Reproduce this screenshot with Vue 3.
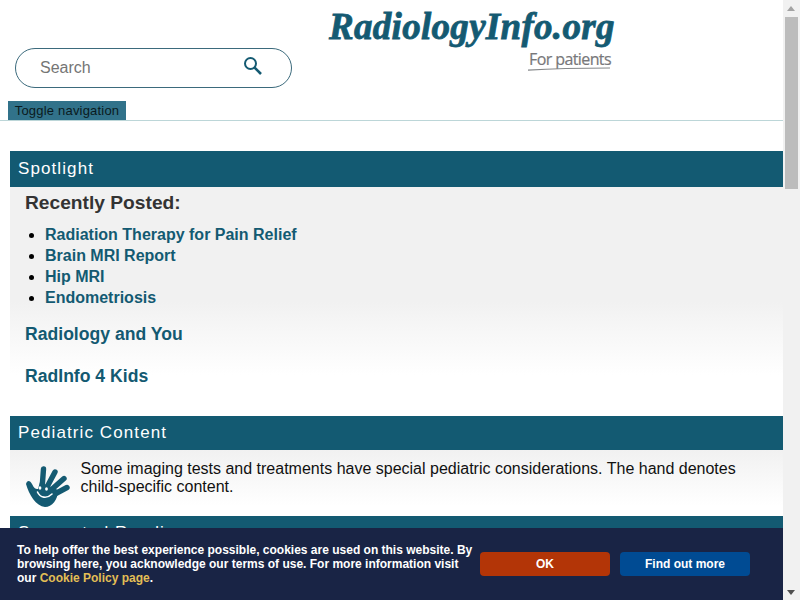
<template>
  <div class="screen">
    <div class="page">
      <header class="site-head">
        <div class="search-col">
          <div class="search">
            <span class="search-text">Search</span>
            <svg class="search-icon" width="20" height="20" viewBox="0 0 20 20">
              <circle cx="7.5" cy="7.5" r="5.5" fill="none" stroke="#145a72" stroke-width="2" />
              <path d="M11.6 11.6 L18 18" stroke="#145a72" stroke-width="2.6" />
            </svg>
          </div>
        </div>
        <div class="logo">
          <div class="logo-name">RadiologyInfo.org</div>
          <div class="logo-sub">For patients</div>
          <svg class="logo-curve" width="84" height="4" viewBox="0 0 84 4">
            <path d="M1 3.2 C26 1.6 56 1 83 1" fill="none" stroke="#85888a" stroke-width="1.2" />
          </svg>
        </div>
      </header>
      <div class="nav-row">
        <button class="toggle">Toggle navigation</button>
      </div>

      <main class="content">
        <section class="panel">
          <h2 class="panel-head">Spotlight</h2>
          <div class="panel-body spotlight">
            <h3 class="recent">Recently Posted:</h3>
            <ul class="recent-list">
              <li v-for="item in recent" :key="item"><a href="#">{{ item }}</a></li>
            </ul>
            <a class="big-link first" href="#">Radiology and You</a>
            <a class="big-link" href="#">RadInfo 4 Kids</a>
          </div>
        </section>

        <section class="panel">
          <h2 class="panel-head short">Pediatric Content</h2>
          <div class="panel-body pediatric">
            <svg class="hand" width="46" height="44" viewBox="0 0 46 44">
              <g stroke="#145a72" stroke-width="5.4" stroke-linecap="round">
                <path d="M17 24 L18.5 4" />
                <path d="M22 22 L30 7" />
                <path d="M26 25 L39 13.5" />
                <path d="M28 30 L42 22.5" />
              </g>
              <path fill="#145a72" d="M1 19 C2 15 5 15 7 19 C9 23 10 24 13 24 L15 17 L33 25 C33 35 27 42 20 42 C11 41 4 30 1 19 Z" />
              <ellipse cx="15" cy="23" rx="1.4" ry="1.7" fill="#fff" />
              <ellipse cx="21.5" cy="24" rx="1.4" ry="1.7" fill="#fff" />
              <path d="M12.5 27 C15 33 22 34 27 29" fill="none" stroke="#fff" stroke-width="1.6" stroke-linecap="round" />
            </svg>
            <p class="ped-text">Some imaging tests and treatments have special pediatric considerations. The hand denotes child-specific content.</p>
          </div>
        </section>

        <section class="panel">
          <h2 class="panel-head short">Suggested Reading</h2>
        </section>
      </main>

      <div class="cookie">
        <p class="cookie-text">To help offer the best experience possible, cookies are used on this website. By browsing here, you acknowledge our terms of use. For more information visit our <a href="#">Cookie Policy page</a>.</p>
        <button class="btn ok">OK</button>
        <button class="btn more">Find out more</button>
      </div>
    </div>

    <div class="scrollbar">
      <div class="arrow up"></div>
      <div class="thumb-track"><div class="thumb"></div></div>
      <div class="arrow down"></div>
    </div>
  </div>
</template>

<script setup>
const recent = [
  'Radiation Therapy for Pain Relief',
  'Brain MRI Report',
  'Hip MRI',
  'Endometriosis'
]
</script>

<style>
html, body {
  margin: 0;
  overflow: hidden;
}
</style>

<style scoped>
.screen {
  width: 800px;
  height: 600px;
  display: flex;
  overflow: hidden;
  font-family: "Liberation Sans", Arial, sans-serif;
  background: #fff;
}

.page {
  position: relative;
  width: 783px;
  height: 600px;
  overflow: hidden;
}

.site-head {
  height: 101px;
  display: flex;
}

.search-col {
  width: 329px;
  padding: 48px 0 0 15px;
  box-sizing: border-box;
}

.search {
  width: 277px;
  height: 40px;
  box-sizing: border-box;
  border: 1px solid #3b6a7c;
  border-radius: 20px;
  display: flex;
  align-items: center;
  justify-content: space-between;
  padding: 0 28px 0 24px;
}

.search-text {
  font-size: 16px;
  color: #757575;
}

.search-icon {
  margin-bottom: 4px;
}

.logo {
  width: 290px;
  padding-top: 6px;
}

.logo-name {
  font-family: "Liberation Serif", serif;
  font-weight: bold;
  font-style: italic;
  font-size: 37px;
  line-height: 41px;
  letter-spacing: 0.3px;
  color: #145a72;
  -webkit-text-stroke: 0.8px #145a72;
  white-space: nowrap;
}

.logo-sub {
  width: 82px;
  margin: 4px 0 0 200px;
  font-family: "Open Sans", sans-serif;
  font-size: 16px;
  line-height: 16px;
  letter-spacing: -0.6px;
  color: #77777a;
  -webkit-text-stroke: 0.2px #77777a;
  white-space: nowrap;
  text-align: right;
}

.logo-curve {
  display: block;
  margin-left: 198px;
}

.nav-row {
  height: 19px;
  padding-left: 8px;
  border-bottom: 1px solid #bcd6d8;
}

.toggle {
  display: block;
  width: 118px;
  height: 19px;
  padding: 0;
  border: none;
  background: #31728a;
  color: #0a1a20;
  font-family: "Liberation Sans", Arial, sans-serif;
  font-size: 13px;
  letter-spacing: 0.2px;
  line-height: 19px;
}

.content {
  padding: 30px 0 0 10px;
}

.panel-head {
  margin: 0;
  height: 36px;
  padding-left: 8px;
  background: #135a72;
  color: #fff;
  font-size: 17px;
  font-weight: normal;
  letter-spacing: 1.1px;
  line-height: 36px;
}

.panel-head.short {
  height: 34px;
  line-height: 34px;
}

.panel-body {
  background: linear-gradient(#f1f1f1 0, #f1f1f1 50%, #fff 82%);
}

.spotlight {
  height: 229px;
  box-sizing: border-box;
  padding: 4px 0 0 15px;
}

.recent {
  margin: 0;
  font-size: 19.2px;
  line-height: 23px;
  color: #333;
}

.recent-list {
  margin: 10px 0 0;
  padding-left: 20px;
}

.recent-list li {
  font-size: 16px;
  line-height: 21px;
}

.recent-list a {
  color: #135a72;
  font-weight: bold;
  text-decoration: none;
}

.big-link {
  display: block;
  margin-top: 21px;
  font-size: 17.6px;
  line-height: 21px;
  font-weight: bold;
  color: #135a72;
  text-decoration: none;
}

.big-link.first {
  margin-top: 16px;
}

.pediatric {
  height: 66px;
  box-sizing: border-box;
  display: flex;
  padding: 10px 0 0 15px;
  background: linear-gradient(#f1f1f1 0, #fff 85%);
}

.hand {
  flex: none;
  margin-top: 5px;
}

.ped-text {
  width: 665px;
  margin: 0 0 0 9.5px;
  font-size: 16px;
  line-height: 18px;
  color: #111;
}

.cookie {
  position: absolute;
  left: 0;
  right: 0;
  bottom: 0;
  height: 72px;
  box-sizing: border-box;
  display: flex;
  align-items: center;
  padding: 0 33px 0 17px;
  background: #192445;
}

.cookie-text {
  width: 463px;
  flex: none;
  margin: 0;
  font-size: 12px;
  line-height: 14px;
  font-weight: bold;
  color: #fff;
}

.cookie-text a {
  color: #e3bf55;
  text-decoration: none;
}

.btn {
  height: 24px;
  width: 130px;
  padding: 0;
  border: none;
  border-radius: 4px;
  color: #fff;
  font-family: "Liberation Sans", Arial, sans-serif;
  font-size: 12px;
  font-weight: bold;
}

.ok {
  background: #b33507;
}

.more {
  margin-left: 10px;
  background: #004b93;
}

.scrollbar {
  width: 17px;
  height: 600px;
  flex: none;
  display: flex;
  flex-direction: column;
  background: #f1f1f1;
}

.arrow {
  height: 17px;
  flex: none;
  position: relative;
}

.arrow::after {
  content: "";
  position: absolute;
  left: 4px;
  border-left: 4px solid transparent;
  border-right: 4px solid transparent;
}

.arrow.up::after {
  top: 6px;
  border-bottom: 5px solid #a3a3a3;
}

.arrow.down::after {
  top: 7px;
  border-top: 5px solid #505050;
}

.thumb-track {
  flex: 1;
}

.thumb {
  width: 13px;
  height: 172px;
  margin-left: 2px;
  background: #bcbcbc;
}
</style>
